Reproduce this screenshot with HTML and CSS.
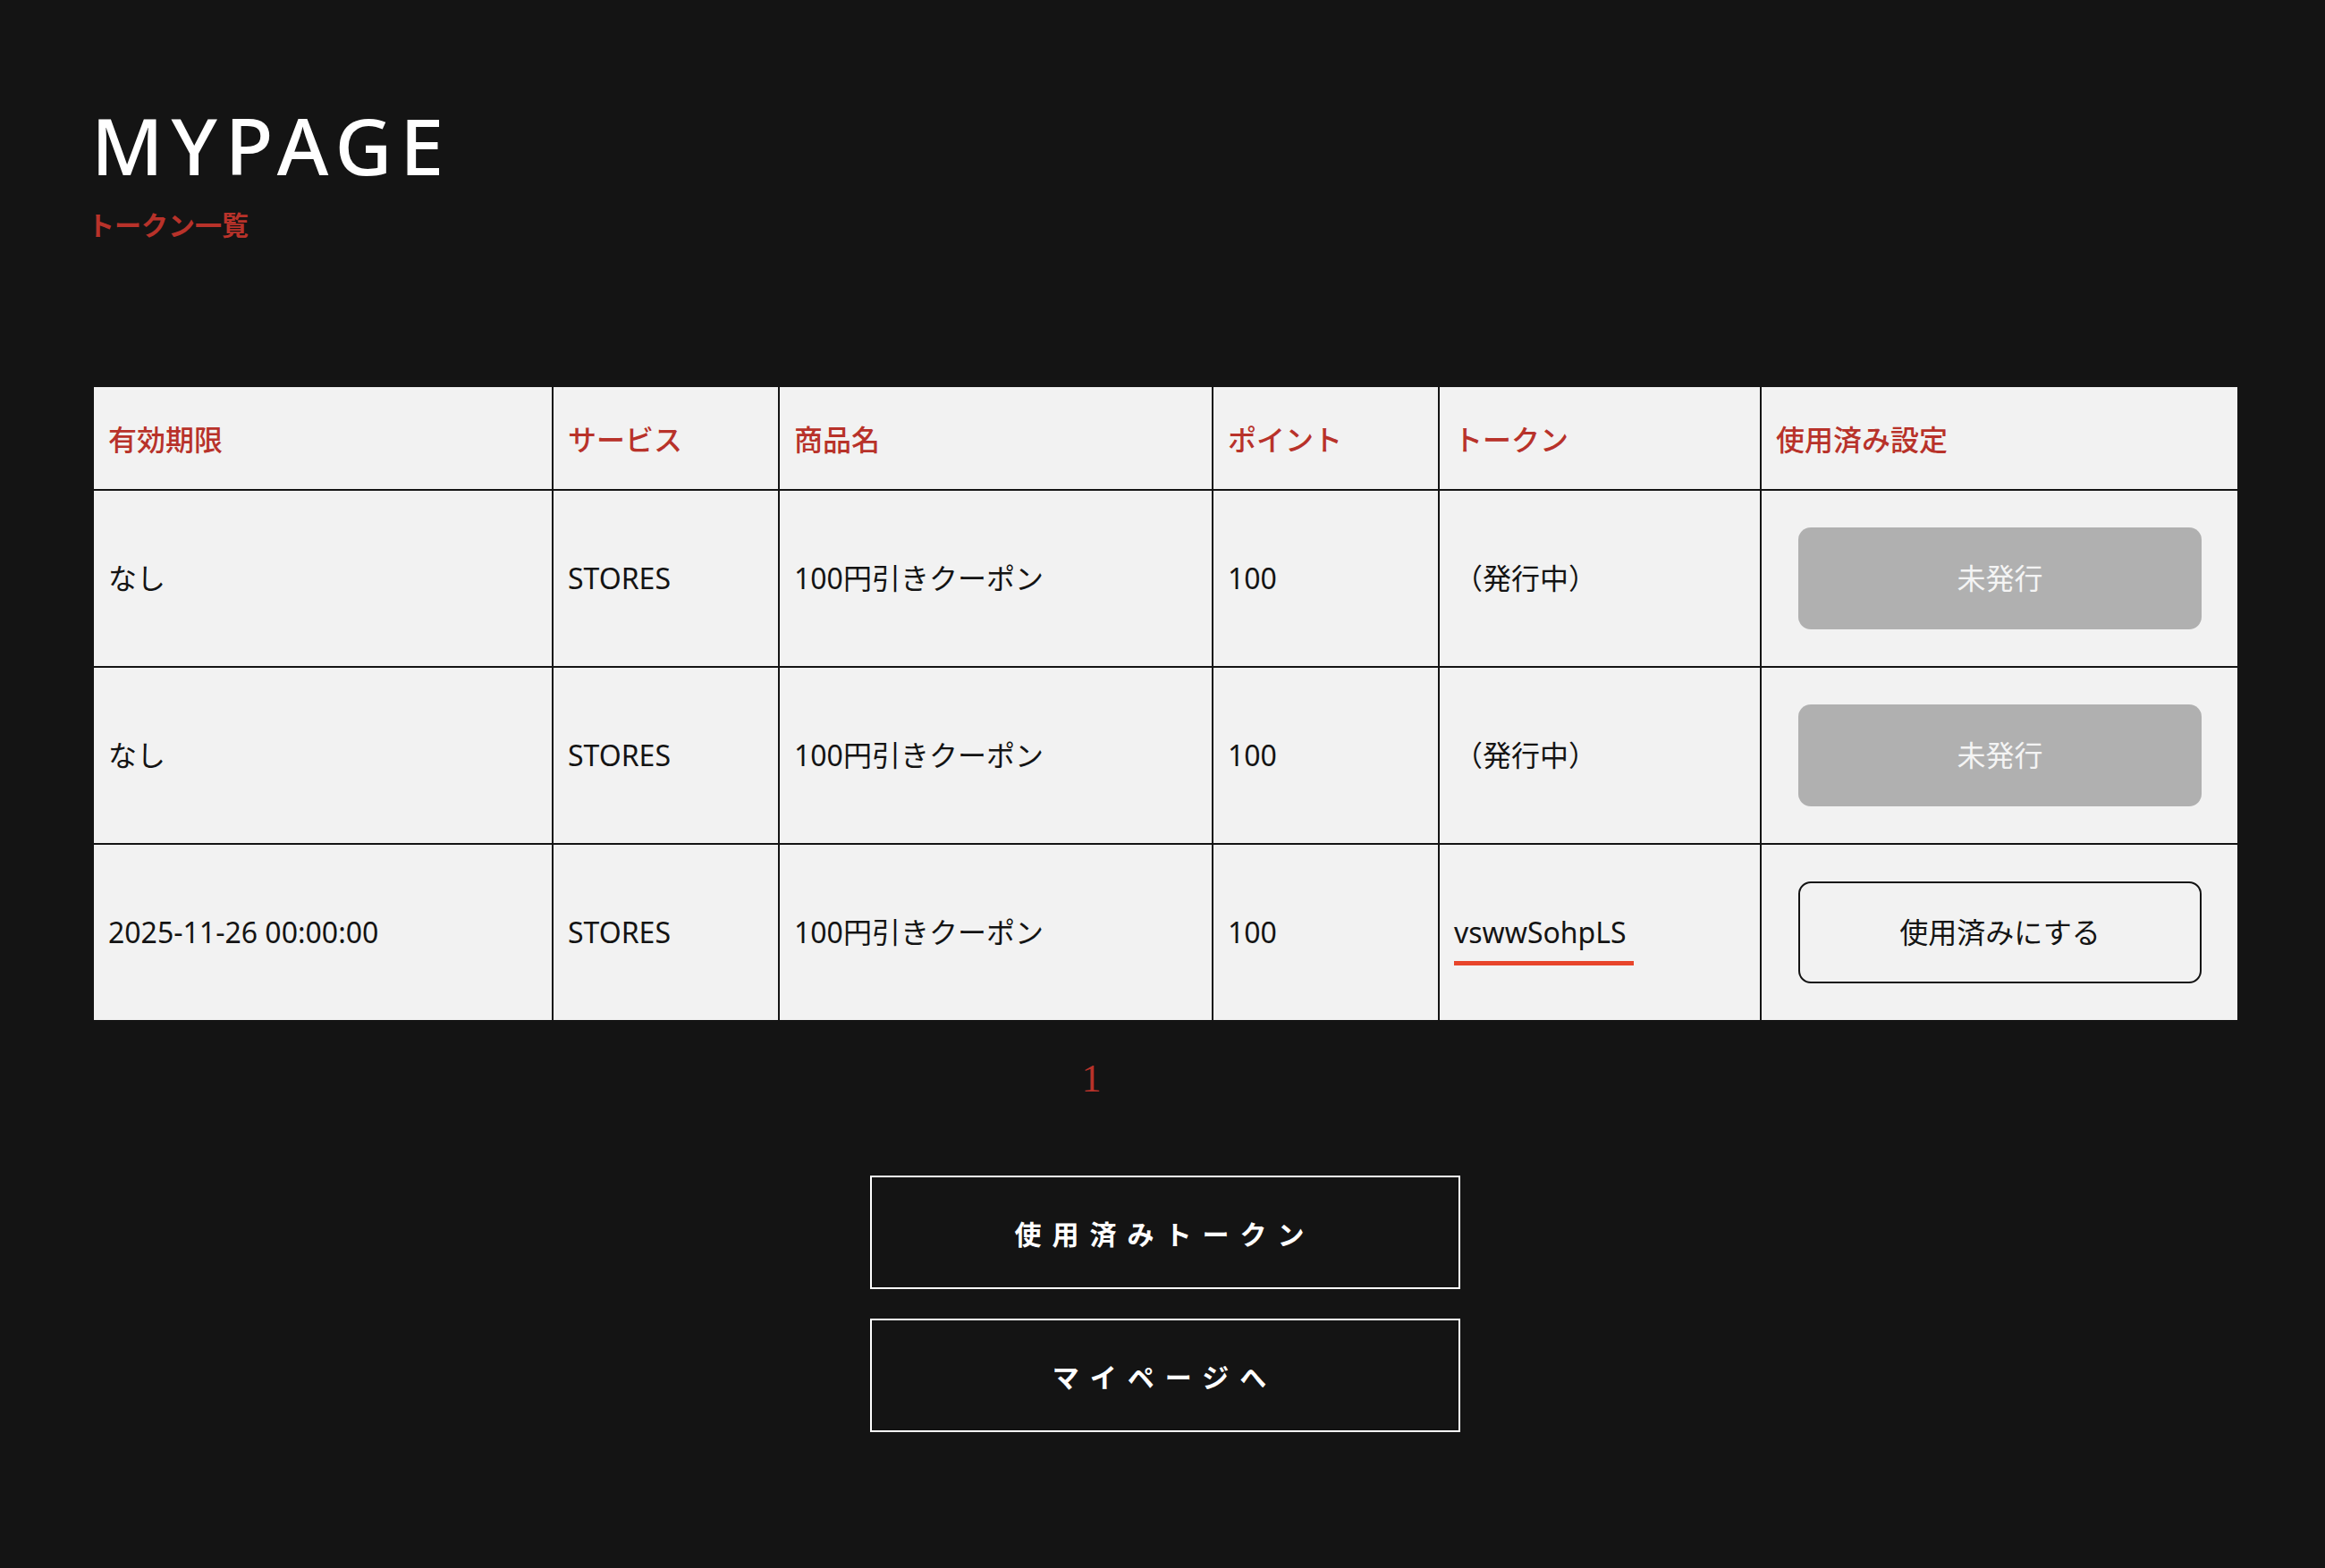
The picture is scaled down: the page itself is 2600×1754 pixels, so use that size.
FILE: index.html
```html
<!DOCTYPE html>
<html lang="ja">
<head>
<meta charset="utf-8">
<title>MYPAGE - トークン一覧</title>
<link rel="stylesheet" href="styles.css">
</head>
<body>
<main class="page">
  <header class="page-head">
    <h1 class="title">MYPAGE</h1>
    <p class="subtitle">トークン一覧</p>
  </header>

  <table class="tokens">
    <colgroup>
      <col class="col-expire">
      <col class="col-service">
      <col class="col-product">
      <col class="col-point">
      <col class="col-token">
      <col class="col-action">
    </colgroup>
    <thead>
      <tr>
        <th>有効期限</th>
        <th>サービス</th>
        <th>商品名</th>
        <th>ポイント</th>
        <th>トークン</th>
        <th>使用済み設定</th>
      </tr>
    </thead>
    <tbody>
      <tr>
        <td>なし</td>
        <td>STORES</td>
        <td>100円引きクーポン</td>
        <td>100</td>
        <td class="token-pending">（発行中）</td>
        <td class="action-cell"><span class="row-btn row-btn-disabled">未発行</span></td>
      </tr>
      <tr>
        <td>なし</td>
        <td>STORES</td>
        <td>100円引きクーポン</td>
        <td>100</td>
        <td class="token-pending">（発行中）</td>
        <td class="action-cell"><span class="row-btn row-btn-disabled">未発行</span></td>
      </tr>
      <tr>
        <td>2025-11-26 00:00:00</td>
        <td>STORES</td>
        <td>100円引きクーポン</td>
        <td>100</td>
        <td><span class="token-code">vswwSohpLS</span></td>
        <td class="action-cell"><a class="row-btn row-btn-outline" href="#">使用済みにする</a></td>
      </tr>
    </tbody>
  </table>

  <nav class="pager"><span class="pager-current">1</span></nav>

  <div class="actions">
    <a class="action-btn" href="#">使用済みトークン</a>
    <a class="action-btn" href="#">マイページへ</a>
  </div>
</main>
</body>
</html>
```

FILE: styles.css
```css
html, body {
  margin: 0;
  padding: 0;
  background: #141414;
}

body {
  font-family: "Noto Sans", "Noto Sans CJK JP", sans-serif;
  color: #141414;
}

.page {
  padding: 118px 98px 120px 103px;
}

.page-head {
  display: flex;
  flex-direction: column;
}

.title {
  margin: 0 0 0 -1px;
  font-family: "Noto Sans", sans-serif;
  font-weight: 500;
  font-size: 88px;
  line-height: 1;
  letter-spacing: 0.1em;
  color: #ffffff;
}

.subtitle {
  margin: 26px 0 0 -5px;
  font-family: "Noto Sans CJK JP", sans-serif;
  font-weight: 700;
  font-size: 30px;
  line-height: 1.2;
  color: #b8322a;
}

.tokens {
  margin-top: 163px;
  width: 2399px;
  table-layout: fixed;
  border-collapse: collapse;
  background: #f2f2f2;
}

.col-expire { width: 514px; }
.col-service { width: 253px; }
.col-product { width: 485px; }
.col-point { width: 253px; }
.col-token { width: 360px; }
.col-action { width: 534px; }

.tokens th,
.tokens td {
  border: 2px solid #141414;
  padding: 0 16px;
  text-align: left;
  vertical-align: middle;
  font-size: 32px;
  line-height: 1.4;
  white-space: nowrap;
}

.tokens th {
  height: 116px;
  padding-top: 4px;
  box-sizing: border-box;
  font-weight: 500;
  color: #b8322a;
}

.tokens td {
  height: 196px;
  font-weight: 400;
  color: #141414;
}

.tokens td.action-cell {
  padding: 0 40px 0 41px;
}

.token-code {
  display: inline-block;
  padding: 0 8px 10px 0;
  border-bottom: 5px solid #e8452b;
  margin-top: 15px;
}

.row-btn {
  display: flex;
  align-items: center;
  justify-content: center;
  box-sizing: border-box;
  height: 114px;
  border-radius: 14px;
  font-size: 32px;
  text-decoration: none;
}

.row-btn-disabled {
  background: #b0b0b0;
  color: #f4f4f4;
}

.row-btn-outline {
  border: 2px solid #141414;
  color: #141414;
  background: transparent;
}

.pager {
  display: flex;
  justify-content: center;
  padding-right: 164px;
  margin-top: 42px;
}

.pager-current {
  font-family: "Liberation Serif", serif;
  font-size: 44px;
  line-height: 1;
  color: #b8322a;
}

.actions {
  display: flex;
  flex-direction: column;
  align-items: center;
  gap: 33px;
  margin-top: 86px;
}

.action-btn {
  display: flex;
  align-items: center;
  justify-content: center;
  box-sizing: border-box;
  width: 660px;
  height: 127px;
  border: 2px solid #ffffff;
  color: #ffffff;
  text-decoration: none;
  font-family: "Noto Sans CJK JP", sans-serif;
  font-weight: 700;
  font-size: 30px;
  letter-spacing: 12px;
}
```
